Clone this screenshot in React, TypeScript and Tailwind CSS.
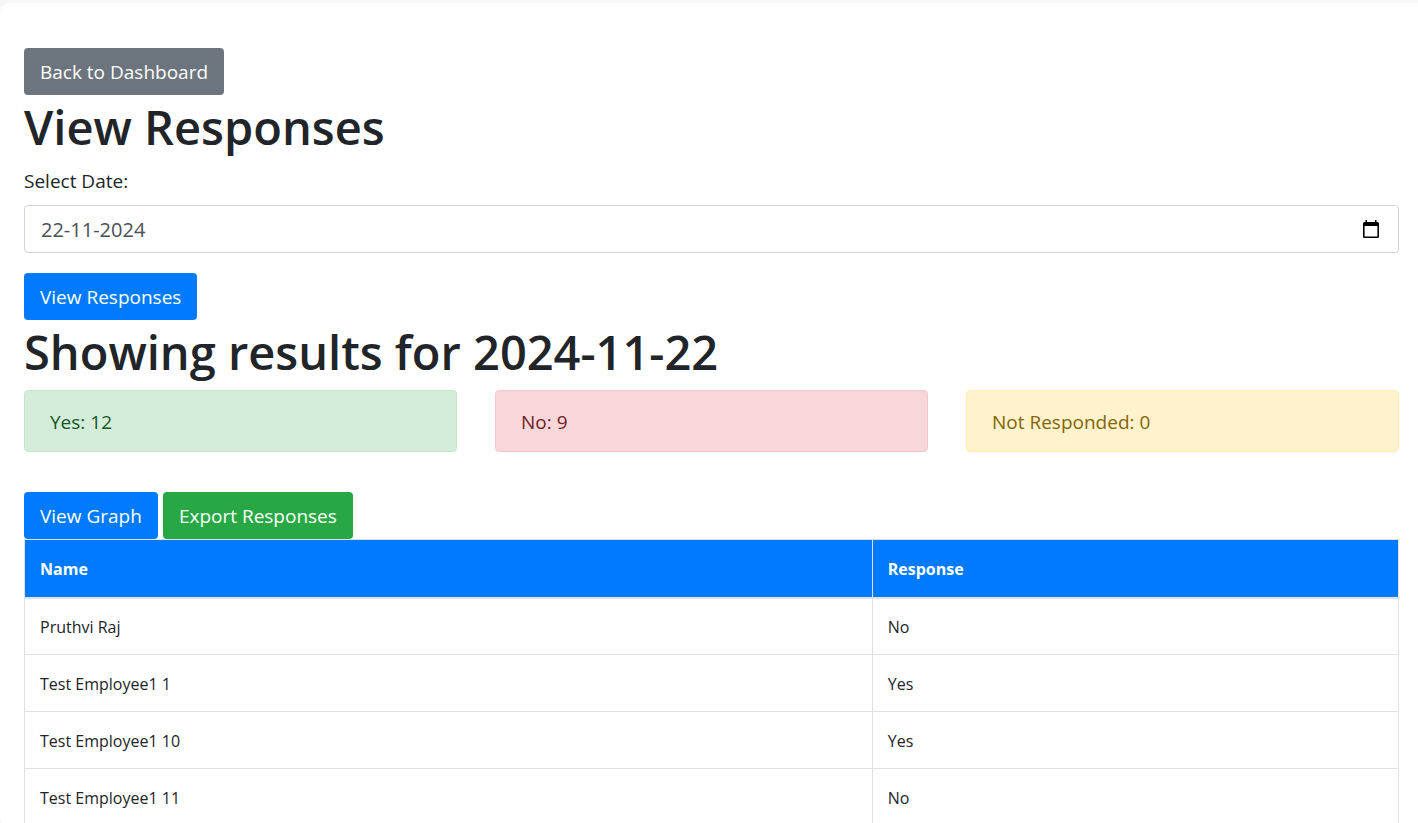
import { useState } from "react";

const responses = [
  { name: "Pruthvi Raj", response: "No" },
  { name: "Test Employee1 1", response: "Yes" },
  { name: "Test Employee1 10", response: "Yes" },
  { name: "Test Employee1 11", response: "No" },
];

const button =
  "inline-flex h-[47px] items-center rounded px-4 pt-[2px] text-[19px] text-white cursor-pointer";

const summary = [
  { label: "Yes: 12", tone: "border-[#c3e6cb] bg-[#d4edda] text-[#155724]" },
  { label: "No: 9", tone: "border-[#f5c6cb] bg-[#f8d7da] text-[#721c24]" },
  { label: "Not Responded: 0", tone: "border-[#ffeeba] bg-[#fff3cd] text-[#856404]" },
];

function CalendarIcon() {
  return (
    <svg viewBox="0 0 16 18" className="h-[18px] w-4" aria-hidden="true">
      <path
        d="M2.500 0H4v2h8V0h1.500v2h1A1.500 1.500 0 0 1 16 3.500V16.500A1.500 1.500 0 0 1 14.500 18h-13A1.500 1.500 0 0 1 0 16.500V3.500A1.500 1.500 0 0 1 1.500 2h1zM1.600 6v10.400h12.800V6z"
        fill="black"
        fillRule="evenodd"
      />
    </svg>
  );
}

export default function App() {
  const [date, setDate] = useState("22-11-2024");

  return (
    <div className="min-h-screen bg-[#f6f7f9] pt-[3px] font-['Open_Sans','Noto_Sans',sans-serif] text-[#212529]">
      <main className="min-h-screen rounded-l-[10px] bg-white pt-[45px] pr-[19px] pl-6">
        <a href="#dashboard" className={`${button} bg-[#6c757d]`}>
          Back to Dashboard
        </a>
        <h1 className="flex h-[75px] items-start pt-1 text-[47px] leading-[56px] font-semibold">
          View Responses
        </h1>

        <form onSubmit={(event) => event.preventDefault()}>
          <label htmlFor="date" className="block h-[35px] text-[19px] leading-[22px]">
            Select Date:
          </label>
          <div className="flex h-12 items-center rounded border border-[#ced4da] pr-[19px] pl-4">
            <input
              id="date"
              type="text"
              value={date}
              onChange={(event) => setDate(event.target.value)}
              className="min-w-0 flex-1 pt-[2px] text-xl text-[#495057] outline-none"
            />
            <button type="button" aria-label="Open calendar" className="cursor-pointer">
              <CalendarIcon />
            </button>
          </div>
          <button type="submit" className={`${button} mt-5 bg-[#007bff]`}>
            View Responses
          </button>
        </form>

        <h2 className="flex h-[70px] items-start pt-1 text-[47px] leading-[56px] font-semibold">
          Showing results for 2024-11-22
        </h2>

        <div className="grid grid-cols-3 gap-[38px]">
          {summary.map(({ label, tone }) => (
            <div
              key={label}
              className={`flex h-[62px] items-center rounded border px-[25px] pt-[2px] text-[19px] ${tone}`}
            >
              {label}
            </div>
          ))}
        </div>

        <div className="mt-10 flex gap-[5px]">
          <button type="button" className={`${button} bg-[#007bff]`}>
            View Graph
          </button>
          <button type="button" className={`${button} bg-[#28a745]`}>
            Export Responses
          </button>
        </div>

        <table className="w-full table-fixed border-collapse border border-[#dee2e6] text-left text-base">
          <thead className="bg-[#007bff] text-white">
            <tr className="h-[58px]">
              <th className="w-[61.7%] border border-b-2 border-[#dee2e6] px-[15px] pt-[2px] font-bold">
                Name
              </th>
              <th className="border border-b-2 border-[#dee2e6] px-[15px] pt-[2px] font-bold">
                Response
              </th>
            </tr>
          </thead>
          <tbody>
            {responses.map(({ name, response }) => (
              <tr key={name} className="h-[57px]">
                <td className="border border-[#dee2e6] px-[15px] pt-[2px]">{name}</td>
                <td className="border border-[#dee2e6] px-[15px] pt-[2px]">{response}</td>
              </tr>
            ))}
          </tbody>
        </table>
      </main>
    </div>
  );
}
